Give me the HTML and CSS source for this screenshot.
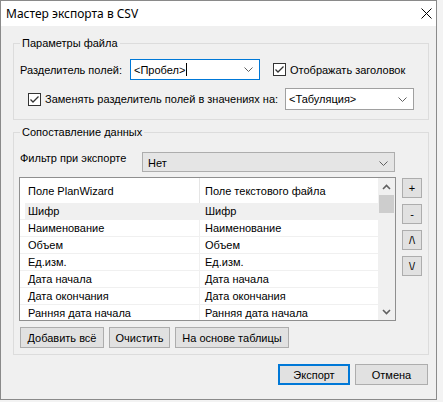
FILE: index.html
```html
<!DOCTYPE html>
<html lang="ru">
<head>
<meta charset="utf-8">
<title>Мастер экспорта в CSV</title>
<link rel="stylesheet" href="styles.css">
</head>
<body>
<div class="window">
  <div class="titlebar">
    <span class="title">Мастер экспорта в CSV</span>
    <svg class="close" width="11" height="11" viewBox="0 0 11 11"><path d="M0.5 0.5 L10.5 10.5 M10.5 0.5 L0.5 10.5" stroke="#000" stroke-width="1" fill="none"/></svg>
  </div>
  <div class="content">
    <fieldset class="group g1">
      <legend>Параметры файла</legend>
      <div class="inner">
        <div class="row1">
          <span class="lbl1">Разделитель полей:</span>
          <div class="combo focus"><span class="val">&lt;Пробел&gt;</span><span class="caret"></span>
            <svg class="chev" width="9" height="5" viewBox="0 0 9 5"><path d="M0.5 0.5 L4.5 4.5 L8.5 0.5" stroke="#606060" fill="none"/></svg></div>
          <label class="check c-head">
            <svg class="box" width="13" height="13" viewBox="0 0 13 13"><rect x="0.5" y="0.5" width="12" height="12" fill="#fff" stroke="#333"/><path d="M2.5 6.5 L5 9 L10.5 3.5" stroke="#333" stroke-width="1.3" fill="none"/></svg>
            <span>Отображать заголовок</span>
          </label>
        </div>
        <div class="row2">
          <label class="check c-repl">
            <svg class="box" width="13" height="13" viewBox="0 0 13 13"><rect x="0.5" y="0.5" width="12" height="12" fill="#fff" stroke="#333"/><path d="M2.5 6.5 L5 9 L10.5 3.5" stroke="#333" stroke-width="1.3" fill="none"/></svg>
            <span>Заменять разделитель полей в значениях на:</span>
          </label>
          <div class="combo tab"><span class="val">&lt;Табуляция&gt;</span>
            <svg class="chev" width="9" height="5" viewBox="0 0 9 5"><path d="M0.5 0.5 L4.5 4.5 L8.5 0.5" stroke="#606060" fill="none"/></svg></div>
        </div>
      </div>
    </fieldset>

    <fieldset class="group g2">
      <legend>Сопоставление данных</legend>
      <div class="inner">
        <div class="filter">
          <span class="lbl2">Фильтр при экспорте</span>
          <div class="combo gray"><span class="val">Нет</span>
            <svg class="chev" width="9" height="5" viewBox="0 0 9 5"><path d="M0.5 0.5 L4.5 4.5 L8.5 0.5" stroke="#606060" fill="none"/></svg></div>
        </div>
        <div class="maprow">
          <div class="list">
            <div class="lmain">
              <div class="lhead"><span class="c1">Поле PlanWizard</span><span class="c2">Поле текстового файла</span></div>
              <div class="lrow sel"><div class="cells"><span class="c1">Шифр</span><span class="c2">Шифр</span></div></div>
              <div class="lrow"><div class="cells"><span class="c1">Наименование</span><span class="c2">Наименование</span></div></div>
              <div class="lrow"><div class="cells"><span class="c1">Объем</span><span class="c2">Объем</span></div></div>
              <div class="lrow"><div class="cells"><span class="c1">Ед.изм.</span><span class="c2">Ед.изм.</span></div></div>
              <div class="lrow"><div class="cells"><span class="c1">Дата начала</span><span class="c2">Дата начала</span></div></div>
              <div class="lrow"><div class="cells"><span class="c1">Дата окончания</span><span class="c2">Дата окончания</span></div></div>
              <div class="lrow"><div class="cells"><span class="c1">Ранняя дата начала</span><span class="c2">Ранняя дата начала</span></div></div>
            </div>
            <div class="vscroll">
              <div class="sarrow"><svg width="9" height="6" viewBox="0 0 9 6"><path d="M1 5 L4.5 1.5 L8 5" stroke="#606060" stroke-width="1.6" fill="none"/></svg></div>
              <div class="thumb"></div>
              <div class="strack"></div>
              <div class="sarrow"><svg width="9" height="6" viewBox="0 0 9 6"><path d="M1 1 L4.5 4.5 L8 1" stroke="#606060" stroke-width="1.6" fill="none"/></svg></div>
            </div>
          </div>
          <div class="sidebtns">
            <div class="btn sbtn">+</div>
            <div class="btn sbtn">-</div>
            <div class="btn sbtn">/\</div>
            <div class="btn sbtn">\/</div>
          </div>
        </div>
        <div class="btnrow">
          <div class="btn b-add">Добавить всё</div>
          <div class="btn b-clr">Очистить</div>
          <div class="btn b-tbl">На основе таблицы</div>
        </div>
      </div>
    </fieldset>

    <div class="dlgbtns">
      <div class="btn b-exp default">Экспорт</div>
      <div class="btn b-cancel">Отмена</div>
    </div>
  </div>
</div>
</body>
</html>
```

FILE: styles.css
```css
* { box-sizing: border-box; }

body {
  margin: 0;
  background: #f3f3f3;
  font-family: "Liberation Sans", Arial, sans-serif;
  font-size: 11px;
  color: #000;
}

.window {
  width: 437px;
  height: 400px;
  border: 1px solid #8a8a8a;
  background: #f0f0f0;
  display: flex;
  flex-direction: column;
}

.titlebar {
  height: 25px;
  flex: none;
  background: #fff;
  display: flex;
  align-items: center;
  justify-content: space-between;
  padding: 0 4px 0 5px;
}

.title {
  font-family: "Noto Sans", "Open Sans", sans-serif;
  font-size: 12px;
}

.close { display: block; }

.content {
  padding: 10px 7px 0 12px;
}

.group {
  margin: 0;
  padding: 0;
  min-width: 0;
  border: 1px solid #dcdcdc;
}

.group legend {
  padding: 0 2px;
  margin-left: 6px;
  line-height: 14px;
}

.g1 .inner { padding: 9px 5px 9px 6px; }

.row1 {
  display: flex;
  align-items: center;
  height: 21px;
}

.lbl1 { width: 110px; }

.combo {
  height: 21px;
  border: 1px solid #7a7a7a;
  background: #fff;
  display: flex;
  align-items: center;
  padding-left: 3px;
}

.combo .chev { margin-left: auto; margin-right: 6px; }

.combo.focus { width: 130px; border-color: #0078d7; }

.caret {
  width: 1px;
  height: 13px;
  background: #000;
  margin-left: 1px;
}

.check {
  display: flex;
  align-items: center;
  gap: 4px;
}

.box { display: block; flex: none; }

.c-head { margin-left: 13px; }

.row2 {
  display: flex;
  align-items: center;
  margin-top: 8px;
  padding-left: 8px;
}

.c-repl { width: 257px; }

.combo.tab { width: 129px; height: 22px; border-color: #a0a0a0; }

.g2 { margin-top: 5px; }

.g2 .inner { padding: 13px 5px 6px 5px; }

.filter {
  display: flex;
  align-items: flex-start;
}

.lbl2 {
  width: 123px;
  padding-left: 1px;
  line-height: 13px;
}

.combo.gray {
  width: 253px;
  height: 20px;
  background: #e5e5e5;
  border-color: #adadad;
  padding-left: 5px;
  padding-top: 2px;
}

.maprow {
  display: flex;
  gap: 6px;
  margin-top: 5px;
}

.list {
  width: 377px;
  height: 144px;
  border: 1px solid #8f8f8f;
  background: #fff;
  display: flex;
}

.lmain {
  flex: 1;
  overflow: hidden;
  min-width: 0;
}

.lhead {
  height: 25px;
  display: flex;
  padding-left: 5px;
}

.lhead .c1,
.lhead .c2 {
  line-height: 25px;
  padding-top: 1px;
  white-space: nowrap;
}

.lhead .c1 {
  width: 175px;
  padding-left: 3px;
  border-right: 1px solid #e5e5e5;
}

.lhead .c2 { padding-left: 5px; }

.lrow {
  height: 17px;
  border-bottom: 1px solid #f0f0f0;
  padding-left: 5px;
}

.cells {
  display: flex;
  height: 16px;
  line-height: 16px;
}

.lrow.sel .cells { background: #f0f0f0; height: 17px; }

.cells .c1 {
  width: 175px;
  padding-left: 3px;
  border-right: 1px solid #f0f0f0;
  white-space: nowrap;
}

.cells .c2 {
  padding-left: 5px;
  white-space: nowrap;
}

.vscroll {
  width: 17px;
  flex: none;
  background: #f0f0f0;
  display: flex;
  flex-direction: column;
}

.sarrow {
  height: 17px;
  display: flex;
  align-items: center;
  justify-content: center;
}

.thumb {
  height: 18px;
  margin: 0 1px;
  background: #cdcdcd;
}

.strack { flex: 1; }

.sidebtns {
  display: flex;
  flex-direction: column;
  gap: 6px;
  margin-top: 1px;
}

.btn {
  background: #e1e1e1;
  border: 1px solid #adadad;
  display: flex;
  align-items: center;
  justify-content: center;
  height: 21px;
}

.sbtn { width: 20px; height: 20px; }

.btnrow {
  display: flex;
  gap: 5px;
  margin-top: 6px;
  margin-left: 1px;
}

.b-add { width: 84px; }
.b-clr { width: 61px; }
.b-tbl { width: 114px; }

.dlgbtns {
  display: flex;
  justify-content: flex-end;
  gap: 5px;
  margin-top: 9px;
  margin-right: 1px;
}

.b-exp { width: 72px; }
.b-cancel { width: 73px; }

.default { border: 2px solid #0078d7; }
```
